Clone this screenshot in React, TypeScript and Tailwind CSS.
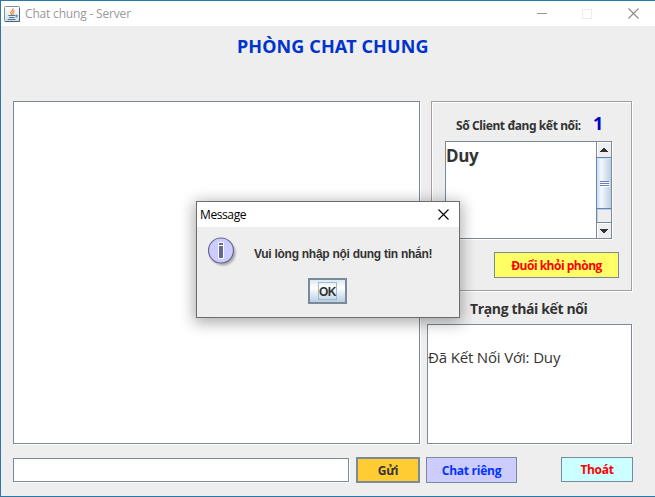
import React from 'react';

function JavaIcon() {
  return (
    <svg width="16" height="16" viewBox="0 0 16 16">
      <defs>
        <linearGradient id="jbg" x1="0" y1="0" x2="0" y2="1">
          <stop offset="0" stopColor="#ffffff" />
          <stop offset="1" stopColor="#d3dee6" />
        </linearGradient>
      </defs>
      <rect x="0.5" y="0.5" width="15" height="15" rx="1" fill="url(#jbg)" stroke="#7d929f" />
      <path d="M15.5 2v13.5H1" fill="none" stroke="#3f6480" />
      <path d="M9.3 2.5c.4 2-2.8 2.6-2.6 4.200.1.700.9 1.200 1.300 1.900M10.800 5c-1.600.5-2.300 1.200-1.700 2.100.4.600.2 1-.3 1.600" fill="none" stroke="#ee8322" strokeWidth="1.200" />
      <path d="M4.300 9.500h6.800M5 11.500h5.500M11.400 9.300c2.200-.6 2.300 1.400.2 1.900M3.800 13.500h7.700" fill="none" stroke="#4f7593" strokeWidth="1.100" />
    </svg>
  );
}

function CloseGlyph({ color }: { color: string }) {
  return (
    <svg width="11" height="11" viewBox="0 0 11 11">
      <path d="M.5.5l10 10M10.500.5l-10 10" stroke={color} strokeWidth="1.100" />
    </svg>
  );
}

function TitleBar() {
  return (
    <header className="flex h-[25px] shrink-0 items-center bg-white pl-[3px]">
      <JavaIcon />
      <span className="ml-[5px] flex-1 whitespace-nowrap text-[12px] leading-[24px] tracking-[-0.18px] text-[#999999]">Chat chung - Server</span>
      <div className="flex items-center pr-[16px]">
        <span className="h-px w-[10px] bg-[#999999]" />
        <span className="ml-[35px] h-[10px] w-[10px] border border-[#ebebeb]" />
        <span className="ml-[36px]"><CloseGlyph color="#8a8a8a" /></span>
      </div>
    </header>
  );
}

function ScrollBar() {
  return (
    <div className="flex w-[15px] flex-col">
      <div className="flex h-[15px] items-center justify-center border-l border-[#7a8a99] bg-[#eeeeee] shadow-[inset_1px_1px_0_#fff]">
        <svg width="8" height="4" viewBox="0 0 8 4" shapeRendering="crispEdges"><path d="M3 0h2v1h1v1h1v1h1v1H0V3h1V2h1V1h1z" fill="#333" /></svg>
      </div>
      <div className="flex h-[52px] flex-col items-center justify-center gap-px border-y border-l border-[#6382bf] bg-linear-to-r from-[#c8d9ec] via-[#f5f9fd] via-30% to-[#b8cfe5] shadow-[inset_1px_1px_0_#d6e2f0]">
        <span className="h-px w-[9px] bg-[#6382bf] shadow-[1px_1px_0_#fff]" />
        <span className="h-px w-[9px] bg-[#6382bf] shadow-[1px_1px_0_#fff]" />
        <span className="h-px w-[9px] bg-[#6382bf] shadow-[1px_1px_0_#fff]" />
      </div>
      <div className="h-[13px] border-l border-[#7a8a99] bg-[#eeeeee] shadow-[inset_1px_1px_0_#b8cfe5]" />
      <div className="flex flex-1 items-center justify-center border-l border-t border-[#7a8a99] bg-[#eeeeee] shadow-[inset_1px_1px_0_#fff]">
        <svg width="8" height="4" viewBox="0 0 8 4" shapeRendering="crispEdges"><path d="M0 0h8v1H7v1H6v1H5v1H3V3H2V2H1V1H0z" fill="#333" /></svg>
      </div>
    </div>
  );
}

function ClientPanel() {
  return (
    <section className="ml-[4px] flex h-[190px] w-[201px] flex-col border border-[#a0a0a0] shadow-[inset_1px_1px_0_#fff,1px_1px_0_#fff]">
      <div className="flex h-[39px] items-center pl-[24px] pt-[8px]">
        <span className="w-[137px] whitespace-nowrap font-['Noto_Sans'] text-[12px] font-bold leading-[16px] tracking-[-0.4px] text-[#333333]">Số Client đang kết nối:</span>
        <span className="-mt-[6px] font-['Noto_Sans'] text-[18px] font-bold leading-[20px] text-[#0000cc]">1</span>
      </div>
      <div className="ml-[13px] flex h-[98px] w-[167px] border border-[#7a8a99] bg-white shadow-[1px_1px_0_#fff]">
        <div className="flex-1 pt-[1px] text-[17px] font-bold leading-[25px] tracking-[-0.4px] text-[#333333]">Duy</div>
        <ScrollBar />
      </div>
      <button className="ml-[62px] mt-[13px] h-[26px] w-[125px] whitespace-nowrap border border-[#7a8a99] bg-[#ffff66] pt-px text-[12px] font-bold leading-[24px] tracking-[-0.5px] text-[#ff0000]">Đuổi khỏi phòng</button>
    </section>
  );
}

function InfoIcon() {
  return (
    <svg width="32" height="32" viewBox="0 0 32 32">
      <defs><filter id="soft" x="-20%" y="-20%" width="150%" height="150%"><feGaussianBlur stdDeviation="1.300" /></filter></defs>
      <circle cx="16" cy="16" r="12.500" fill="#777" opacity=".6" filter="url(#soft)" />
      <circle cx="14" cy="13.500" r="12.500" fill="#ccccff" stroke="#666699" strokeWidth="1.200" />
      <path d="M11.500 5.500h5v3h-5zM11.500 8.500h5v13h-5z" fill="#666699" stroke="#fff" />
    </svg>
  );
}

function MessageDialog() {
  return (
    <div role="dialog" className="absolute left-[195px] top-[200px] flex h-[117px] w-[264px] flex-col border border-[#6c6c6c] bg-[#eeeeee] shadow-[0_3px_14px_2px_rgba(0,0,0,0.32)]">
      <div className="flex h-[25px] items-center justify-between bg-white pl-[3px] pr-[10px]">
        <span className="text-[12px] leading-[24px] tracking-[-0.4px] text-black">Message</span>
        <CloseGlyph color="#000000" />
      </div>
      <div className="flex h-[51px] pl-[10px] pt-[10px]">
        <InfoIcon />
        <span className="ml-[15px] mt-[9px] whitespace-nowrap font-['Liberation_Sans'] text-[12px] font-bold leading-[16px] tracking-[-0.27px] text-[#333333]">Vui lòng nhập nội dung tin nhắn!</span>
      </div>
      <button className="ml-[111px] flex h-[26px] w-[39px] items-center justify-center border-2 border-[#7a8a99] bg-linear-to-b from-[#dde8f3] via-white via-35% to-[#b8cfe5]">
        <span className="flex h-[18px] w-[19px] items-center justify-center border border-[#a3b8cc] pt-px font-['Liberation_Sans'] text-[12px] font-bold tracking-[-0.6px] text-[#333333]">OK</span>
      </button>
    </div>
  );
}

export default function App() {
  return (
    <div className="relative flex h-[497px] w-[655px] flex-col overflow-hidden border-y border-l border-[#2878a8] bg-[#eeeeee] font-['Open_Sans','Noto_Sans',sans-serif]">
      <TitleBar />
      <h1 className="ml-[236px] h-[75px] whitespace-nowrap pt-[7px] font-['Noto_Sans'] text-[18px] font-bold leading-[26px] tracking-[0.12px] text-[#0033cc]">PHÒNG CHAT CHUNG</h1>
      <main className="ml-[12px] flex gap-[7px]">
        <div className="h-[343px] w-[407px] border border-[#7a8a99] bg-white shadow-[1px_1px_0_#fff]" />
        <aside className="flex w-[205px] flex-col">
          <ClientPanel />
          <h2 className="ml-[43px] h-[33px] whitespace-nowrap pt-[8px] text-[14px] font-bold leading-[20px] tracking-[-0.37px] text-[#333333]">Trạng thái kết nối</h2>
          <div className="h-[120px] whitespace-nowrap border border-[#7a8a99] bg-white pt-[22px] text-[15px] leading-[20px] tracking-[-0.16px] text-[#333333] shadow-[1px_1px_0_#fff]">Đã Kết Nối Với: Duy</div>
        </aside>
      </main>
      <footer className="ml-[12px] mt-[13px] flex items-start whitespace-nowrap text-[12px] font-bold">
        <div className="mt-px h-[24px] w-[336px] border border-[#7a8a99] bg-white shadow-[1px_1px_0_#fff]" />
        <button className="ml-[7px] h-[26px] w-[64px] border-2 border-[#7a8a99] bg-[#ffcc33] pt-px leading-[22px] tracking-[-0.4px] text-[#333333]">Gửi</button>
        <button className="ml-[6px] h-[26px] w-[91px] border border-[#7a8a99] bg-[#ccccff] pt-px leading-[24px] tracking-[-0.25px] text-[#0033ff]">Chat riêng</button>
        <button className="ml-[44px] h-[25px] w-[72px] border border-[#7a8a99] bg-[#ccffff] leading-[23px] tracking-[-0.3px] text-[#ff0000]">Thoát</button>
      </footer>
      <MessageDialog />
    </div>
  );
}
